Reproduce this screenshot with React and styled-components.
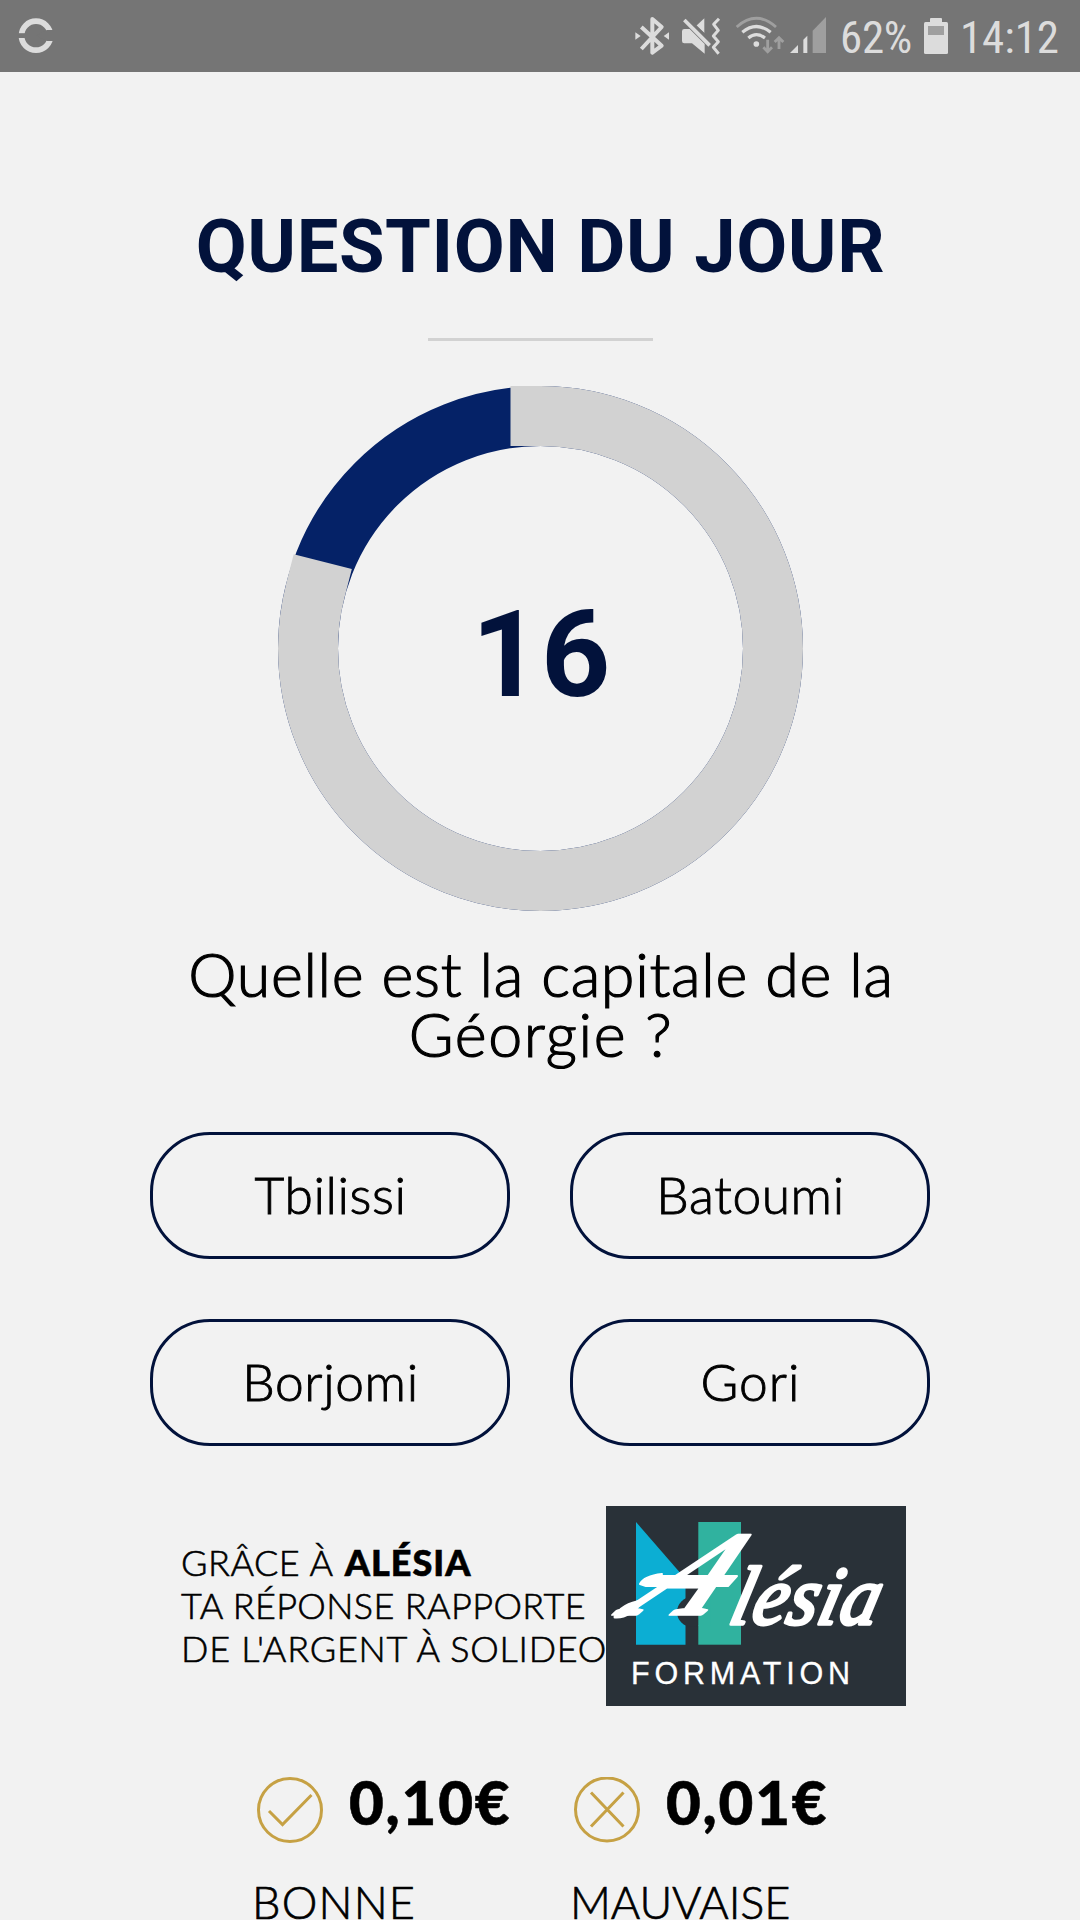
import React from "react";
import styled, { createGlobalStyle } from "styled-components";

const colors = {
  page: "#f2f2f2",
  bar: "#757575",
  barIcon: "#dcdcdc",
  barDim: "#9f9f9f",
  navy: "#02123b",
  blue: "#052267",
  grey: "#d2d2d2",
  gold: "#c6a144",
};

const GlobalStyle = createGlobalStyle`
  * { box-sizing: border-box; }
  body { margin: 0; background: ${colors.page}; }
`;

const Screen = styled.div`
  width: 1080px;
  height: 1920px;
  overflow: hidden;
  background: ${colors.page};
  color: #000;
  font-family: Lato, "Open Sans", sans-serif;
  font-weight: 300;
`;

const StatusBar = styled.header`
  display: flex;
  align-items: flex-start;
  height: 72px;
  padding: 0 21px 0 17px;
  background: ${colors.bar};
  color: ${colors.barIcon};
`;

const StatusIcon = styled.svg`
  display: block;
  flex: none;
  width: ${(p) => p.$w}px;
  height: 60px;
  margin-top: 5px;
  margin-left: ${(p) => (p.$push ? "auto" : `${p.$gap || 0}px`)};
`;

const StatusText = styled.span`
  flex: none;
  width: ${(p) => p.$w}px;
  margin-left: ${(p) => p.$gap}px;
  font: 400 45px/75px "Roboto Condensed", Roboto, sans-serif;
  letter-spacing: ${(p) => p.$spacing}px;
  white-space: nowrap;
`;

const Main = styled.main`
  display: flex;
  flex-direction: column;
  align-items: center;
  padding-top: 135px;
`;

const Title = styled.h1`
  margin: 0;
  padding-left: 1px;
  font: 700 74px/80px Roboto, sans-serif;
  letter-spacing: 0.6px;
  color: ${colors.navy};
  white-space: nowrap;
`;

const Divider = styled.hr`
  width: 225px;
  height: 3px;
  margin: 51px 0 0;
  border: 0;
  background: ${colors.grey};
`;

const Timer = styled.div`
  display: grid;
  place-items: center;
  width: 526px;
  height: 525px;
  margin-top: 45px;

  & > * {
    grid-area: 1 / 1;
  }
`;

const TimerRing = styled.svg`
  display: block;
  overflow: visible;
`;

const TimerValue = styled.div`
  padding: 14px 0 0 2px;
  font: 700 121px/1 Roboto, sans-serif;
  color: ${colors.navy};
`;

const Question = styled.h2`
  margin: 33px 0 0;
  font-size: 61px;
  line-height: 60px;
  font-weight: 300;
  text-align: center;
  white-space: nowrap;
  -webkit-text-stroke: 1.2px #000;
`;

const QuestionLine = styled.span`
  display: block;
  padding-left: 2px;
  letter-spacing: ${(p) => p.$spacing}px;
`;

const Answers = styled.div`
  display: grid;
  grid-template-columns: 360px 360px;
  grid-auto-rows: 127px;
  gap: 60px;
  margin-top: 68px;
`;

const Answer = styled.button`
  padding: 0 0 4px 1px;
  border: 3px solid ${colors.navy};
  border-radius: 60px;
  background: transparent;
  color: #000;
  font: 300 51.5px/60px Lato, sans-serif;
  letter-spacing: ${(p) => p.$spacing}px;
  -webkit-text-stroke: 0.9px #000;
`;

const Sponsor = styled.section`
  display: flex;
  align-items: center;
  align-self: flex-start;
  height: 200px;
  margin: 60px 0 0 181px;
`;

const SponsorText = styled.p`
  width: 425px;
  margin: 0;
  padding-bottom: 2px;
  font-size: 36px;
  line-height: 43px;
  white-space: nowrap;
  -webkit-text-stroke: 0.6px #000;
`;

const SponsorLine = styled.span`
  display: block;
  letter-spacing: ${(p) => p.$spacing}px;
`;

const SponsorName = styled.strong`
  margin-left: 2px;
  font-weight: 900;
  letter-spacing: 1px;
`;

const Logo = styled.svg`
  display: block;
  flex: none;
`;

const Rewards = styled.section`
  display: grid;
  grid-template-columns: 318px 319px;
  align-self: flex-start;
  margin: 65px 0 0 252px;
`;

const RewardTop = styled.div`
  display: flex;
  align-items: flex-start;
  height: 72px;
  padding-left: ${(p) => p.$indent}px;
`;

const RewardIcon = styled.svg`
  display: block;
  flex: none;
  margin: 6px 26px 0 0;
  fill: none;
  stroke: ${colors.gold};
  stroke-width: 3;
`;

const Amount = styled.span`
  font-size: 60px;
  line-height: 62px;
  font-weight: 900;
  letter-spacing: 1.8px;
  -webkit-text-stroke: 0.6px #000;
`;

const RewardLabel = styled.div`
  margin-top: 34px;
  font-size: 45px;
  line-height: 50px;
  letter-spacing: ${(p) => p.$spacing}px;
  -webkit-text-stroke: 0.7px #000;
`;

function Status() {
  const c = colors.barIcon;
  const d = colors.barDim;
  return (
    <StatusBar>
      <StatusIcon $w={38} viewBox="0 0 38 60">
        <circle cx="19" cy="30.7" r="14.5" fill="none" stroke={c} strokeWidth="5.8" />
        <rect x="0" y="28.2" width="12" height="4.8" fill={colors.bar} />
        <path d="M19 30.7L30 25H38V36H30Z" fill={colors.bar} />
      </StatusIcon>
      <StatusIcon $w={39} $push viewBox="39 0 117 180">
        <path d="M64 66L125 122L97 143V42L125 66L64 132" fill="none" stroke={c} strokeWidth="12" strokeLinejoin="round" />
        <path d="M46 82L62 93L46 104ZM147 82L131 93L147 104Z" fill={c} />
      </StatusIcon>
      <StatusIcon $w={40} $gap={9} viewBox="183 0 120 180">
        <path d="M186 79q0-7 7-7H209L254 117V146L216 115H193q-7 0-7-7Z" fill={c} />
        <path d="M229 62L253 40V84Z" fill={c} />
        <path d="M200 37L277 114" stroke={colors.bar} strokeWidth="8" />
        <path d="M193 45L269 121" stroke={c} strokeWidth="11" />
        <path d="M297 41L281 58L295 76L280 93L295 110L280 127L296 146" fill="none" stroke={c} strokeWidth="9" strokeLinejoin="round" />
      </StatusIcon>
      <StatusIcon $w={50} $gap={14} viewBox="345 0 150 180">
        <path d="M350 66Q409 14 468 66" fill="none" stroke={d} strokeWidth="8.5" />
        <path d="M367 82Q409 47 452 82M385 99Q409 79 435 99" fill="none" stroke={c} strokeWidth="9.5" />
        <circle cx="409" cy="117" r="8.5" fill={c} />
        <path d="M443 104V140M430 127L443 140L456 127M477 132V98M464 111L477 98L490 111" fill="none" stroke={d} strokeWidth="8.5" />
      </StatusIcon>
      <StatusIcon $w={38} $gap={4} viewBox="507 0 114 180">
        <path d="M510 144L534 120V144ZM550 104L562 92V144H550Z" fill={c} />
        <path d="M578 77L618 36V144H578Z" fill={d} />
      </StatusIcon>
      <StatusText $w={71} $gap={13} $spacing={-0.3}>62%</StatusText>
      <StatusIcon $w={24} $gap={13} viewBox="0 0 24 60">
        <rect x="6" y="13" width="12" height="6" rx="1" fill={c} />
        <rect x="0" y="17" width="24" height="32" rx="1.5" fill={c} />
        <rect x="4" y="21" width="16" height="9" fill={d} />
      </StatusIcon>
      <StatusText $w={99} $gap={12} $spacing={-0.1}>14:12</StatusText>
    </StatusBar>
  );
}

function Ring({ elapsed }) {
  const r = 232.5;
  const length = 2 * Math.PI * r;
  return (
    <TimerRing width="525" height="525" viewBox="0 0 525 525">
      <circle cx="262.5" cy="262.5" r={r} fill="none" stroke={colors.blue} strokeWidth="60" />
      <circle
        cx="262.5"
        cy="262.5"
        r={r}
        fill="none"
        stroke={colors.grey}
        strokeWidth="60"
        strokeLinecap="square"
        strokeDasharray={`${length * elapsed} ${length}`}
        transform="rotate(-90 262.5 262.5)"
      />
    </TimerRing>
  );
}

function AlesiaLogo() {
  return (
    <Logo width="300" height="200" viewBox="0 0 300 200">
      <rect width="300" height="200" fill="#293138" />
      <path d="M30 16L79.500 73V138.700H30Z" fill="#0caed3" />
      <rect x="92.300" y="16" width="42.700" height="122.700" fill="#30b29f" />
      <circle cx="86" cy="106" r="15" fill="#293138" />
      <rect x="92.300" y="90" width="12" height="30" fill="#30b29f" />
      <g fill="#fff" stroke="#fff" strokeLinejoin="round" fontFamily="'Liberation Serif', serif" fontStyle="italic">
        <text transform="translate(15 108) skewX(-42) scale(1.12 1)" fontSize="119" fontWeight="400" strokeWidth="3.500">A</text>
        <path d="M34 78Q38 70 56 68Q50 70 54 70H131L122 80H40Z" strokeWidth="2" />
        <path d="M9 111Q16 98 36 95Q24 112 9 111Z" strokeWidth="3" />
        <text transform="translate(121 118) skewX(-14) scale(0.92 1)" fontSize="83" fontWeight="400" letterSpacing="1" strokeWidth="3.500">lésia</text>
      </g>
      <text x="25" y="178" fill="#fff" fontFamily="'Liberation Sans', Arial, sans-serif" fontWeight="400" fontSize="30.500" letterSpacing="4.800" stroke="#fff" strokeWidth="0.300">FORMATION</text>
    </Logo>
  );
}

export default function App() {
  return (
    <>
      <GlobalStyle />
      <Screen>
        <Status />
        <Main>
          <Title>QUESTION DU JOUR</Title>
          <Divider />
          <Timer>
            <Ring elapsed={284.3 / 360} />
            <TimerValue>16</TimerValue>
          </Timer>
          <Question>
            <QuestionLine $spacing={0.7}>Quelle est la capitale de la</QuestionLine>
            <QuestionLine $spacing={1.6}>Géorgie ?</QuestionLine>
          </Question>
          <Answers>
            <Answer $spacing={0.6}>Tbilissi</Answer>
            <Answer $spacing={0.6}>Batoumi</Answer>
            <Answer $spacing={0.6}>Borjomi</Answer>
            <Answer $spacing={1}>Gori</Answer>
          </Answers>
          <Sponsor>
            <SponsorText>
              <SponsorLine $spacing={0.54}>
                GRÂCE À <SponsorName>ALÉSIA</SponsorName>
              </SponsorLine>
              <SponsorLine $spacing={0.38}>TA RÉPONSE RAPPORTE</SponsorLine>
              <SponsorLine $spacing={0.78}>DE L'ARGENT À SOLIDEO</SponsorLine>
            </SponsorText>
            <AlesiaLogo />
          </Sponsor>
          <Rewards>
            <div>
              <RewardTop $indent={5}>
                <RewardIcon width="66" height="66" viewBox="0 0 66 66">
                  <circle cx="33" cy="33" r="31.5" />
                  <path d="M12 34L25.500 47.500L54.500 18" />
                </RewardIcon>
                <Amount>0,10€</Amount>
              </RewardTop>
              <RewardLabel $spacing={1.2}>BONNE</RewardLabel>
            </div>
            <div>
              <RewardTop $indent={4}>
                <RewardIcon width="66" height="66" viewBox="0 0 66 66">
                  <circle cx="33" cy="32.500" r="31.5" />
                  <path d="M17 15.500L49.500 49.500M49.500 15.500L17 49.500" />
                </RewardIcon>
                <Amount>0,01€</Amount>
              </RewardTop>
              <RewardLabel $spacing={-0.1}>MAUVAISE</RewardLabel>
            </div>
          </Rewards>
        </Main>
      </Screen>
    </>
  );
}
